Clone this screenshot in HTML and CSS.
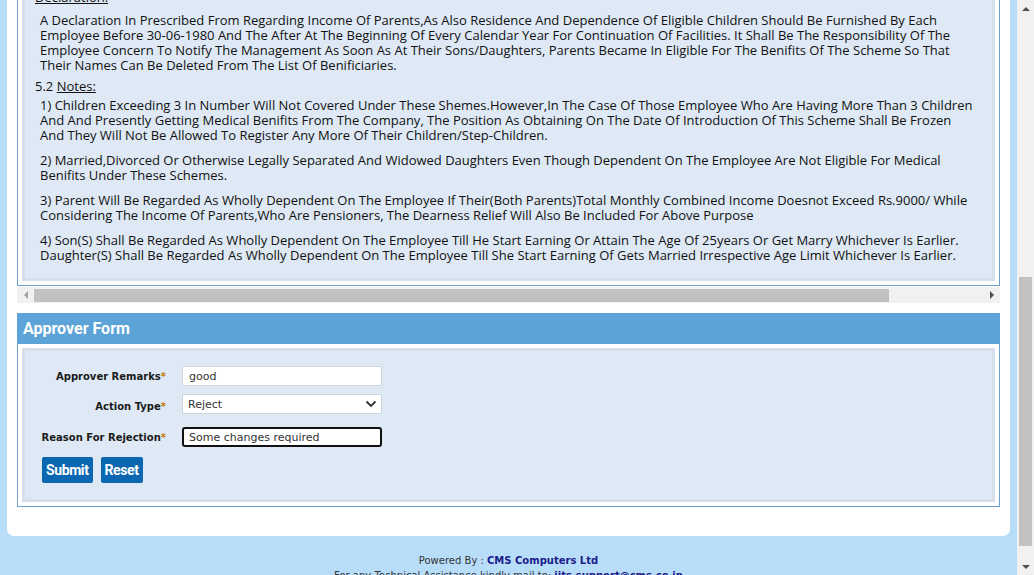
FILE: index.html
```html
<!DOCTYPE html>
<html lang="en">
<head>
<meta charset="utf-8">
<title>Approver Form</title>
<link rel="stylesheet" href="styles.css">
</head>
<body>
<div class="viewport">
  <div class="main">
    <div class="card">
      <div class="doc-scroll">
        <div class="doc-box">
          <div class="doc-inner">
            <h4 class="doc-head first"><u>Declaration:</u></h4>
            <p class="doc-p lead">A Declaration In Prescribed From Regarding Income Of Parents,As Also Residence And Dependence Of Eligible Children Should Be Furnished By Each Employee Before 30-06-1980 And The After At The Beginning Of Every Calendar Year For Continuation Of Facilities. It Shall Be The Responsibility Of The Employee Concern To Notify The Management As Soon As At Their Sons/Daughters, Parents Became In Eligible For The Benifits Of The Scheme So That Their Names Can Be Deleted From The List Of Benificiaries.</p>
            <h4 class="doc-head">5.2 <u>Notes:</u></h4>
            <p class="doc-p">1) Children Exceeding 3 In Number Will Not Covered Under These Shemes.However,In The Case Of Those Employee Who Are Having More Than 3 Children And And Presently Getting Medical Benifits From The Company, The Position As Obtaining On The Date Of Introduction Of This Scheme Shall Be Frozen And They Will Not Be Allowed To Register Any More Of Their Children/Step-Children.</p>
            <p class="doc-p">2) Married,Divorced Or Otherwise Legally Separated And Widowed Daughters Even Though Dependent On The Employee Are Not Eligible For Medical Benifits Under These Schemes.</p>
            <p class="doc-p">3) Parent Will Be Regarded As Wholly Dependent On The Employee If Their(Both Parents)Total Monthly Combined Income Doesnot Exceed Rs.9000/ While Considering The Income Of Parents,Who Are Pensioners, The Dearness Relief Will Also Be Included For Above Purpose</p>
            <p class="doc-p">4) Son(S) Shall Be Regarded As Wholly Dependent On The Employee Till He Start Earning Or Attain The Age Of 25years Or Get Marry Whichever Is Earlier. Daughter(S) Shall Be Regarded As Wholly Dependent On The Employee Till She Start Earning Of Gets Married Irrespective Age Limit Whichever Is Earlier.</p>
          </div>
        </div>
        <div class="hbar">
          <span class="hbtn"><span class="tri tri-left"></span></span>
          <span class="hthumb"></span>
          <span class="hspace"></span>
          <span class="hbtn"><span class="tri tri-right"></span></span>
        </div>
      </div>

      <div class="form-panel">
        <div class="form-head">Approver Form</div>
        <div class="form-body">
          <div class="form-inner">
            <div class="field">
              <label class="label" for="remarks">Approver Remarks<span class="req">*</span></label>
              <input class="input" id="remarks" type="text" value="good">
            </div>
            <div class="field">
              <label class="label label-low" for="action">Action Type<span class="req">*</span></label>
              <div class="select-wrap">
                <select class="select" id="action">
                  <option>Reject</option>
                </select>
                <svg class="chev" width="12" height="8" viewBox="0 0 12 8"><path d="M1.5 1.5 L6 6 L10.5 1.5" fill="none" stroke="#333" stroke-width="1.8"/></svg>
              </div>
            </div>
            <div class="field field-reason">
              <label class="label" for="reason">Reason For Rejection<span class="req">*</span></label>
              <input class="input input-focus" id="reason" type="text" value="Some changes required">
            </div>
            <div class="buttons">
              <button class="btn" type="button">Submit</button>
              <button class="btn" type="button">Reset</button>
            </div>
          </div>
        </div>
      </div>
    </div>

    <footer class="footer">
      <div class="foot-line">Powered By : <b class="brand">CMS Computers Ltd</b></div>
      <div class="foot-line">For any Technical Assistance kindly mail to: <b class="brand">iits.support@cms.co.in</b></div>
    </footer>
  </div>

  <div class="vbar">
    <span class="vbtn"><span class="tri tri-up"></span></span>
    <span class="vspace-top"></span>
    <span class="vthumb"></span>
    <span class="vspace"></span>
    <span class="vbtn"><span class="tri tri-down"></span></span>
  </div>
</div>
</body>
</html>
```

FILE: styles.css
```css
* { box-sizing: border-box; }

html, body {
  margin: 0;
  padding: 0;
  height: 100%;
}

body {
  background: #b8ddf9;
  overflow: hidden;
  font-family: "Open Sans", "DejaVu Sans", sans-serif;
  color: #111;
}

.viewport {
  display: flex;
  height: 575px;
}

.main {
  flex: 1;
  min-width: 0;
  overflow: hidden;
}

.card {
  background: #fff;
  margin: 0 7px;
  padding: 0 10px 29px;
  border-radius: 0 0 7px 7px;
}

/* ---------- document box ---------- */
.doc-box {
  border: 1px solid #6b9fd2;
  border-top: 0;
  padding: 0 4px 4px;
}

.doc-inner {
  background: #dee9f5;
  border: 3px solid #d5dee9;
  border-top: 0;
  padding: 0 17px 15px 10px;
  font-size: 13px;
  line-height: 15px;
  color: #111;
}

.doc-head {
  margin: 6px 0 0;
  font-size: 13px;
  font-weight: normal;
  line-height: 15px;
}

.doc-head.first {
  margin-top: -10px;
}

.doc-p {
  margin: 10px 0 0 5px;
}

.doc-head + .doc-p {
  margin-top: 4px;
}

.doc-head.first + .doc-p {
  margin-top: 8px;
}

/* ---------- horizontal scrollbar ---------- */
.hbar {
  margin-top: 1px;
  height: 16px;
  background: #f1f1f1;
  display: flex;
  align-items: center;
}

.hbtn {
  width: 17px;
  height: 16px;
  display: flex;
  align-items: center;
  justify-content: center;
  flex: none;
}

.hthumb {
  width: 855px;
  height: 13px;
  background: #c1c1c1;
  flex: none;
}

.hspace { flex: 1; }

.tri {
  width: 0;
  height: 0;
  display: block;
}

.tri-left {
  border-top: 4px solid transparent;
  border-bottom: 4px solid transparent;
  border-right: 4px solid #a3a3a3;
}

.tri-right {
  border-top: 4px solid transparent;
  border-bottom: 4px solid transparent;
  border-left: 4px solid #505050;
}

.tri-up {
  border-left: 4px solid transparent;
  border-right: 4px solid transparent;
  border-bottom: 4px solid #505050;
}

.tri-down {
  border-left: 4px solid transparent;
  border-right: 4px solid transparent;
  border-top: 4px solid #505050;
}

/* ---------- form panel ---------- */
.form-panel {
  margin-top: 10px;
  border: 1px solid #6b9fd2;
}

.form-head {
  height: 31px;
  margin: -1px -1px 0;
  padding: 1px 0 0 6px;
  background: #5ca3d8;
  color: #fff;
  font-family: Roboto, "Open Sans", sans-serif;
  font-weight: bold;
  font-size: 16px;
  line-height: 30px;
}

.form-body {
  padding: 4px;
}

.form-inner {
  background: #dee9f5;
  border: 3px solid #d5dee9;
  padding: 15px 0 16px;
}

.field {
  display: flex;
  align-items: center;
  gap: 16px;
}

.field + .field {
  margin-top: 8px;
}

.field.field-reason {
  margin-top: 13px;
}

.label {
  width: 141px;
  flex: none;
  text-align: right;
  white-space: nowrap;
  font-family: "DejaVu Sans", Verdana, sans-serif;
  font-weight: bold;
  font-size: 10px;
  color: #1a1a1a;
}

.label-low {
  position: relative;
  top: 2px;
}

.req {
  color: #c07a00;
}

.input,
.select {
  width: 200px;
  height: 20px;
  margin: 0;
  border: 1px solid #cdd5e0;
  background: #fff;
  font-family: "DejaVu Sans", Verdana, sans-serif;
  font-size: 11px;
  color: #333;
  padding: 0 0 0 6px;
  outline: none;
  border-radius: 0;
}

.select-wrap {
  position: relative;
  width: 200px;
  height: 20px;
}

.select {
  appearance: none;
  -webkit-appearance: none;
  padding-left: 5px;
  display: block;
}

.chev {
  position: absolute;
  right: 5px;
  top: 6px;
  pointer-events: none;
}

.input-focus {
  border: 2px solid #111;
  border-radius: 3px;
  padding-left: 5px;
}

.buttons {
  display: flex;
  gap: 8px;
  margin: 10px 0 0 17px;
}

.btn {
  height: 26px;
  margin: 0;
  border: 0;
  border-radius: 2px;
  background: #0b67b2;
  color: #fff;
  font-family: Roboto, "Open Sans", sans-serif;
  font-weight: bold;
  font-size: 14px;
  letter-spacing: -0.4px;
  padding: 0 4px;
  line-height: 26px;
}

/* ---------- footer ---------- */
.footer {
  padding-top: 17px;
  text-align: center;
  font-family: "DejaVu Sans", Verdana, sans-serif;
  font-size: 10px;
  line-height: 15px;
  color: #333;
}

.brand {
  color: #1c1c8a;
}

/* ---------- vertical scrollbar ---------- */
.vbar {
  width: 17px;
  flex: none;
  background: #f1f1f1;
  display: flex;
  flex-direction: column;
  align-items: center;
}

.vbtn {
  width: 17px;
  height: 17px;
  flex: none;
  display: flex;
  align-items: center;
  justify-content: center;
}

.vspace-top {
  flex: none;
  height: 260px;
}

.vthumb {
  flex: none;
  width: 13px;
  height: 269px;
  background: #c1c1c1;
}

.vspace { flex: 1; }
```
